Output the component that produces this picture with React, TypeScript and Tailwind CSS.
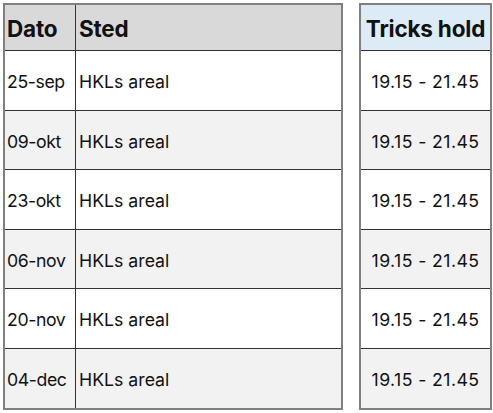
const rows = [
  { dato: "25-sep", sted: "HKLs areal" },
  { dato: "09-okt", sted: "HKLs areal" },
  { dato: "23-okt", sted: "HKLs areal" },
  { dato: "06-nov", sted: "HKLs areal" },
  { dato: "20-nov", sted: "HKLs areal" },
  { dato: "04-dec", sted: "HKLs areal" },
];

export default function App() {
  return (
    <div className="w-[493px] h-[413px] bg-white pl-[3px] pt-[3px] flex gap-[16px] text-[#111] font-['Inter',sans-serif]">
      {/* schedule */}
      <div className="w-[340px] border-2 border-[#808080] flex flex-col self-start">
        <div className="h-[46px] bg-[#d9d9d9] flex border-b border-[#333]">
          <div className="w-[71px] border-r border-[#333] flex items-center pl-[2px] pt-[3px] text-[22.5px] font-bold tracking-[-0.2px]">
            Dato
          </div>
          <div className="flex-1 flex items-center pl-[3px] pt-[3px] text-[22.5px] font-bold tracking-[-0.2px]">
            Sted
          </div>
        </div>
        {rows.map((r, i) => (
          <div
            key={r.dato}
            className={
              "h-[59.5px] flex text-[17.7px] " +
              (i % 2 ? "bg-[#f2f2f2] " : "bg-white ") +
              (i < rows.length - 1 ? "border-b border-[#333]" : "")
            }
          >
            <div className="w-[71px] border-r border-[#333] flex items-center pl-[2px] pt-[5px] tracking-[-0.4px]">
              {r.dato}
            </div>
            <div className="flex-1 flex items-center pl-[3px] pt-[5px]">{r.sted}</div>
          </div>
        ))}
      </div>

      {/* time */}
      <div className="w-[133px] border-2 border-[#808080] flex flex-col self-start">
        <div className="h-[46px] bg-[#ddebf7] border-b border-[#333] flex items-center justify-center pt-[3px] text-[22.5px] font-bold tracking-[-0.2px]">
          Tricks hold
        </div>
        {rows.map((r, i) => (
          <div
            key={r.dato}
            className={
              "h-[59.5px] flex items-center justify-center pt-[5px] text-[17.7px] tracking-[0.4px] " +
              (i % 2 ? "bg-[#f2f2f2] " : "bg-white ") +
              (i < rows.length - 1 ? "border-b border-[#333]" : "")
            }
          >
            19.15 - 21.45
          </div>
        ))}
      </div>
    </div>
  );
}
